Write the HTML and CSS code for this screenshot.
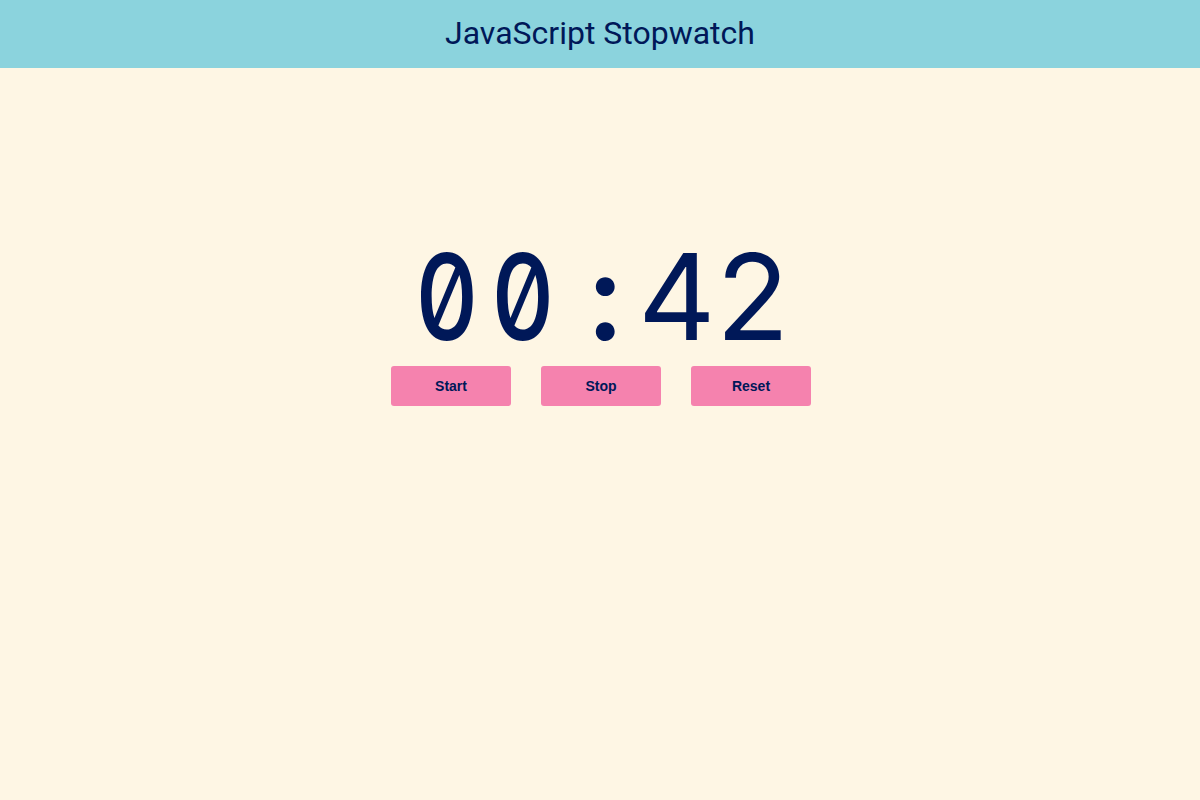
FILE: index.html
```html
<!DOCTYPE html>
<html>
<head>
<meta charset="utf-8">
<link rel="stylesheet" href="styles.css">
</head>
<body>
<header class="header"><h1 class="title">JavaScript Stopwatch</h1></header>
<main class="main">
  <div class="timer">
    <span class="cell zero">0</span>
    <span class="cell zero">0</span>
    <span class="cell sep">:</span>
    <span class="cell four">4</span>
    <span class="cell">2</span>
  </div>
  <div class="controls">
    <button class="btn">Start</button>
    <button class="btn">Stop</button>
    <button class="btn">Reset</button>
  </div>
</main>
</body>
</html>
```
FILE: styles.css
```css
html, body { margin: 0; padding: 0; }
body {
  background: #fef6e4;
  color: #001858;
  font-family: Roboto, "Liberation Sans", sans-serif;
  min-height: 800px;
}
.header {
  background: #8bd3dd;
  height: 68px;
  display: flex;
  align-items: center;
  justify-content: center;
}
.title {
  margin: 0 0 2px;
  font-size: 32px;
  font-weight: 400;
  color: #001858;
}
.main {
  display: flex;
  flex-direction: column;
  align-items: center;
  padding-top: 159px;
}
.timer {
  font-family: Inter, "DejaVu Sans Mono", monospace;
  font-feature-settings: "zero" 1, "tnum" 1;
  font-size: 120px;
  font-weight: 400;
  line-height: 139px;
  color: #001858;
  display: flex;
}
.cell {
  width: 76px;
  display: flex;
  justify-content: center;
}
.zero {
  font-weight: 450;
  transform: scaleX(0.82);
}
.sep {
  width: 24px;
  margin-left: 32px;
  font-weight: 600;
}
.four { margin-left: 22px; }
.controls {
  display: flex;
  gap: 30px;
  margin-left: 2px;
}
.btn {
  width: 120px;
  height: 40px;
  border: none;
  border-radius: 3px;
  background: #f582ae;
  color: #001858;
  font-family: "Liberation Sans", Arial, sans-serif;
  font-weight: 700;
  font-size: 14px;
}
```
